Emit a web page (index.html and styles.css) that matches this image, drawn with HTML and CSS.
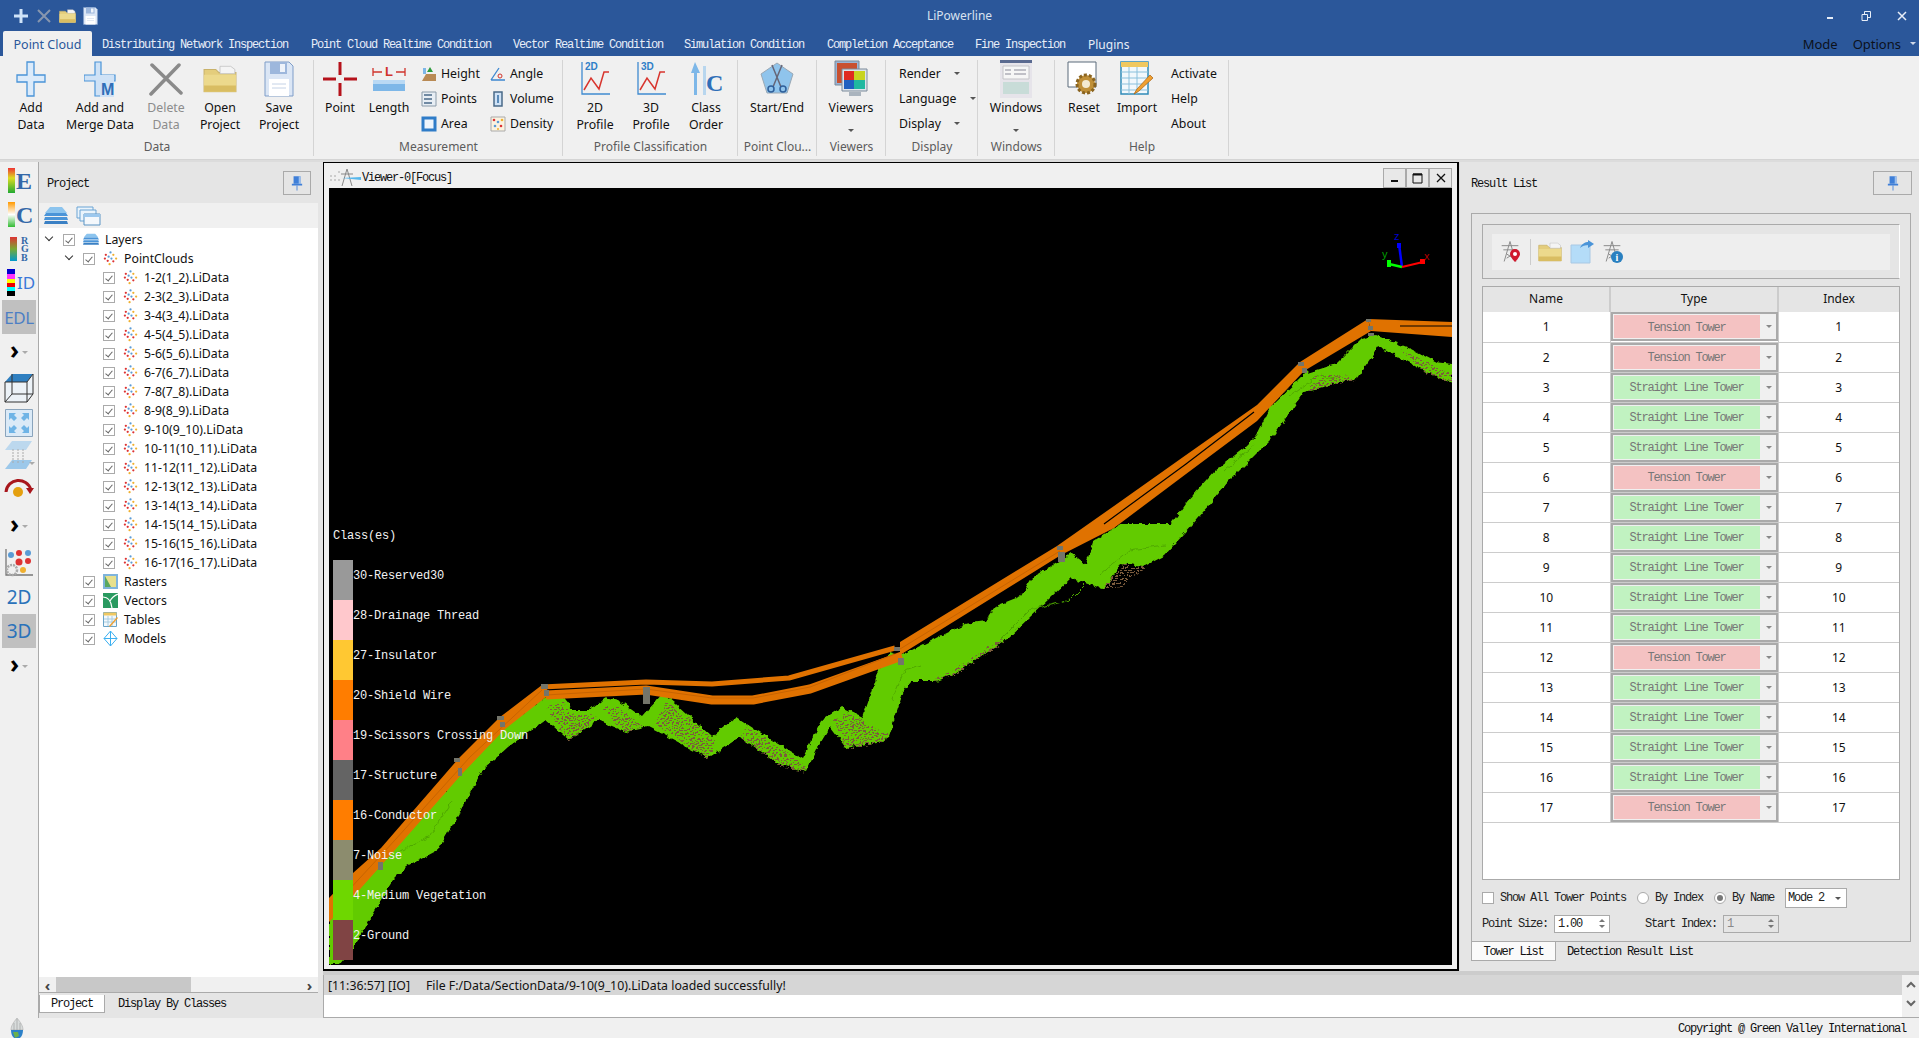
FILE: index.html
```html
<!DOCTYPE html>
<html lang="en">
<head>
<meta charset="utf-8">
<title>LiPowerline</title>
<link rel="stylesheet" href="styles.css">
</head>
<body>
<svg class="defs" width="0" height="0">
  <defs>
    <symbol id="cloud" viewBox="0 0 16 16">
      <circle cx="8" cy="1.5" r="1.2" fill="#5b9bd5"/><circle cx="3" cy="4" r="1.2" fill="#d33"/><circle cx="11" cy="4" r="1.2" fill="#f0b030"/><circle cx="6" cy="6" r="1.2" fill="#5b9bd5"/><circle cx="2" cy="8" r="1.2" fill="#d33"/><circle cx="9" cy="8" r="1.2" fill="#5b9bd5"/><circle cx="14" cy="8" r="1.2" fill="#f0b030"/><circle cx="5" cy="10.5" r="1.2" fill="#d33"/><circle cx="11" cy="11" r="1.2" fill="#d33"/><circle cx="7" cy="14" r="1.2" fill="#f0b030"/>
    </symbol>
    <symbol id="layers" viewBox="0 0 24 18">
      <path d="M6 0h12l5 6H1z" fill="#8cc4ee"/><path d="M2 6h20l2 3H0z" fill="#4a94d8"/><path d="M1 10h22l1 3H0z" fill="#4a94d8"/><path d="M1 14h22l1 3H0z" fill="#3a80c4"/>
    </symbol>
    <symbol id="folder" viewBox="0 0 32 26">
      <path d="M1 4h11l3 3h16v18H1z" fill="#e4cd7c" stroke="#c9b26a"/><path d="M16 1h10l4 3v4H16z" fill="#f4f4f4" stroke="#bbb" stroke-width=".7"/><path d="M1 9h30v16H1z" fill="#ecd98c"/><path d="M1 19h30v6H1z" fill="#d9bd62"/>
    </symbol>
    <symbol id="floppy" viewBox="0 0 30 36">
      <path d="M1 1h24l4 4v30H1z" fill="#dbe6f5" stroke="#7e9dc8"/><path d="M6 1h17v12H6z" fill="#9db7dc"/><path d="M16 3h5v8h-5z" fill="#eef3fa"/><path d="M5 18h20v17H5z" fill="#fff"/><path d="M8 23h14M8 27h14" stroke="#c4d2e6"/>
    </symbol>
    <symbol id="pin" viewBox="0 0 14 18">
      <path d="M3 1h8v9H3z" fill="#3f7fd8"/><path d="M1 10h12v2H1z" fill="#3f7fd8"/><path d="M9 1h2v9H9z" fill="#9cc0ee"/><path d="M7 12v6" stroke="#3f7fd8"/>
    </symbol>
    <symbol id="tower" viewBox="0 0 24 26">
      <g fill="none" stroke="#8c8c8c" stroke-width="1.2"><path d="M12 1 5 25M12 1l7 24M2 6h20M4 11h16M8 16l8 5M16 16l-8 5"/></g>
    </symbol>
    <pattern id="specks" width="5" height="5" patternUnits="userSpaceOnUse">
      <rect width="2" height="1" x="0" y="0" fill="#7b5b3c"/><rect width="1" height="2" x="3" y="2" fill="#7b5b3c"/><rect width="2" height="1" x="1" y="3" fill="#7b5b3c"/><rect width="1" height="1" x="4" y="0" fill="#7b5b3c"/>
    </pattern>
    <filter id="rough" x="-2%" y="-2%" width="104%" height="104%">
      <feTurbulence type="fractalNoise" baseFrequency=".16" numOctaves="2" seed="4"/>
      <feDisplacementMap in="SourceGraphic" scale="6" xChannelSelector="R" yChannelSelector="G"/>
    </filter>
  </defs>
</svg>

<div class="app">
  <header class="titlebar">
    <div class="qat">
      <svg width="16" height="16" viewBox="0 0 16 16"><path d="M8 1v14M1 8h14" stroke="#cfe3f8" stroke-width="3"/></svg>
      <svg width="16" height="16" viewBox="0 0 16 16"><path d="M2 2l12 12M14 2 2 14" stroke="#8796ae" stroke-width="2"/></svg>
      <svg width="17" height="14" viewBox="0 0 32 26"><use href="#folder"/></svg>
      <svg width="15" height="18" viewBox="0 0 30 36"><use href="#floppy"/></svg>
    </div>
    <div class="apptitle">LiPowerline</div>
    <div class="winctl">
      <svg width="10" height="10" viewBox="0 0 10 10"><path d="M2 7h6" stroke="#e8eef8" stroke-width="2"/></svg>
      <svg width="10" height="10" viewBox="0 0 10 10"><path d="M1 3.500h5.500v6H1zM3.500 3V.500h6v6H7" fill="none" stroke="#e8eef8"/></svg>
      <svg width="10" height="10" viewBox="0 0 10 10"><path d="M1 1l8 8M9 1 1 9" stroke="#e8eef8" stroke-width="1.500"/></svg>
    </div>
  </header>
  <nav class="tabs">
    <span class="tab active">Point Cloud</span>
    <span class="tab mono t1">Distributing Network Inspection</span>
    <span class="tab mono t2">Point Cloud Realtime Condition</span>
    <span class="tab mono t3">Vector Realtime Condition</span>
    <span class="tab mono t4">Simulation Condition</span>
    <span class="tab mono t5">Completion Acceptance</span>
    <span class="tab mono t6">Fine Inspection</span>
    <span class="tab t7">Plugins</span>
    <span class="tabs-right"><span>Mode</span><span>Options</span><i class="caret dark"></i></span>
  </nav>

  <section class="ribbon">
    <div class="group g-data">
      <div class="group-body">
        <div class="big w-add"><svg width="30" height="38" viewBox="0 0 30 38"><path d="M11 2h7v13h11v7H18v14h-7V22H1v-7h10z" fill="#dcebfa" stroke="#4a94d8" stroke-width="1.300"/></svg><span>Add<br>Data</span></div>
        <div class="big w-merge"><svg width="32" height="38" viewBox="0 0 32 38"><path d="M11 2h6v13h14v6H17v15h-6V21H0v-6h11z" fill="#cfe2f6" stroke="#4a94d8" stroke-width="1.200"/><path d="M16 15h14v22H16z" fill="#cfe2f6"/><text class="micon" x="17" y="35">M</text></svg><span>Add and<br>Merge Data</span></div>
        <div class="big w-del off"><svg width="34" height="34" viewBox="0 0 34 34"><path d="M2 32 30 3M3 3l29 28" stroke="#8a8a8a" stroke-width="3.500" stroke-linecap="round"/></svg><span>Delete<br>Data</span></div>
        <div class="big w-open"><svg width="34" height="32" viewBox="0 0 32 26"><use href="#folder"/></svg><span>Open<br>Project</span></div>
        <div class="big w-save"><svg width="30" height="36" viewBox="0 0 30 36"><use href="#floppy"/></svg><span>Save<br>Project</span></div>
      </div>
      <div class="group-label">Data</div>
    </div>
    <div class="group g-meas">
      <div class="group-body">
        <div class="big w-point"><svg width="34" height="34" viewBox="0 0 34 34"><path d="M17 0v13M17 21v13M0 17h13M21 17h13" stroke="#b5121b" stroke-width="3"/></svg><span>Point</span></div>
        <div class="big w-len"><svg width="34" height="28" viewBox="0 0 34 28"><path d="M1 7h9M24 7h9M1 3v8M33 3v8" stroke="#d0342c" stroke-width="1.300"/><text class="licon" x="13" y="11">L</text><path d="M1 15h32v11H1z" fill="#7db7e8"/><path d="M1 15h32v4H1z" fill="#b9d9f4"/></svg><span>Length</span></div>
        <div class="smalls first">
          <div class="small"><svg width="16" height="16" viewBox="0 0 16 16"><path d="M1 15 5 8h10v7z" fill="#b98a54"/><path d="M9 1l3 5H6z" fill="#2c9a3c"/><path d="M2 2h3v6H2z" fill="#7db7e8"/></svg>Height</div>
          <div class="small"><svg width="16" height="16" viewBox="0 0 16 16"><path d="M1 1h14v14H1z" fill="#e8eef4" stroke="#8a9aa8"/><path d="M3 4h8M3 8h8M3 12h8" stroke="#4a6a88" stroke-width="1.500"/></svg>Points</div>
          <div class="small"><svg width="16" height="16" viewBox="0 0 16 16"><path d="M2 2h12v12H2z" fill="#eef5fc" stroke="#2f7cc8" stroke-width="3"/></svg>Area</div>
        </div>
        <div class="smalls">
          <div class="small"><svg width="16" height="16" viewBox="0 0 16 16"><path d="M1 14 9 2M1 14h14" stroke="#3c86d0" fill="none" stroke-width="1.300"/><circle cx="10" cy="10" r="2" fill="none" stroke="#d0342c"/></svg>Angle</div>
          <div class="small"><svg width="16" height="16" viewBox="0 0 16 16"><path d="M4 1h8v14H4z" fill="#cfe2f6" stroke="#4a6a88" stroke-width="1.500"/><path d="M7 4h2v8H7z" fill="#5a8ab8"/></svg>Volume</div>
          <div class="small"><svg width="16" height="16" viewBox="0 0 16 16"><path d="M1 1h14v14H1z" fill="#fbf3e0" stroke="#aaa"/><circle cx="4" cy="4" r="1.300" fill="#d33"/><circle cx="8" cy="6" r="1.300" fill="#5b9bd5"/><circle cx="12" cy="4" r="1.300" fill="#f0b030"/><circle cx="5" cy="10" r="1.300" fill="#5b9bd5"/><circle cx="11" cy="10" r="1.300" fill="#d33"/><circle cx="8" cy="13" r="1" fill="#f0b030"/></svg>Density</div>
        </div>
      </div>
      <div class="group-label">Measurement</div>
    </div>
    <div class="group g-prof">
      <div class="group-body">
        <div class="big w-56"><svg width="34" height="38" viewBox="0 0 34 38"><path d="M4 2v32h28" fill="none" stroke="#3f8ad0" stroke-width="1.300"/><text class="dicon" x="7" y="10">2D</text><path d="M6 30l7-12 8 11 5-17h5" fill="none" stroke="#d8352e" stroke-width="1.500"/></svg><span>2D<br>Profile</span></div>
        <div class="big w-56"><svg width="34" height="38" viewBox="0 0 34 38"><path d="M4 2v32h28" fill="none" stroke="#3f8ad0" stroke-width="1.300"/><text class="dicon" x="7" y="10">3D</text><path d="M6 30l7-12 8 11 5-17h5" fill="none" stroke="#d8352e" stroke-width="1.500"/></svg><span>3D<br>Profile</span></div>
        <div class="big w-cls"><svg width="34" height="36" viewBox="0 0 34 36"><path d="M6 1 2 12h3v22h3V12h3z" fill="#7db7e8"/><path d="M14 5h3v29h-3z" fill="#b8d6ee"/><text class="cicon" x="17" y="30">C</text></svg><span>Class<br>Order</span></div>
      </div>
      <div class="group-label">Profile Classification</div>
    </div>
    <div class="group g-se">
      <div class="group-body">
        <div class="big w-se"><svg width="36" height="36" viewBox="0 0 36 36"><path d="M18 2 34 13 28 32H8L2 13z" fill="#8fc4ec" stroke="#9aa8b4"/><path d="M13 4l9 22M23 4 14 26" stroke="#667" stroke-width="1.500"/><circle cx="12" cy="28" r="3" fill="none" stroke="#2f5f9a" stroke-width="1.500"/><circle cx="24" cy="28" r="3" fill="none" stroke="#2f5f9a" stroke-width="1.500"/></svg><span>Start/End</span></div>
      </div>
      <div class="group-label">Point Clou...</div>
    </div>
    <div class="group g-view">
      <div class="group-body">
        <div class="big w-vw"><svg width="34" height="38" viewBox="0 0 34 38"><path d="M1 1h24v24H1z" fill="#9ab4d4" stroke="#7a8a9a"/><path d="M3 3h20v20H3z" fill="#c85030"/><path d="M8 9h25v22H8z" fill="#dde3ea" stroke="#7a8a9a"/><path d="M10 11h10v9H10z" fill="#e02a20"/><path d="M20 11h11v9H20z" fill="#c8d420"/><path d="M10 20h10v9H10z" fill="#2060c0"/><path d="M20 20h11v9H20z" fill="#20b8a0"/><path d="M15 32h12v4H15z" fill="#aab4be"/></svg><span>Viewers</span><i class="caret below"></i></div>
      </div>
      <div class="group-label">Viewers</div>
    </div>
    <div class="group g-disp">
      <div class="group-body col-items">
        <div class="small plain">Render<i class="caret"></i></div>
        <div class="small plain">Language<i class="caret"></i></div>
        <div class="small plain">Display<i class="caret"></i></div>
      </div>
      <div class="group-label">Display</div>
    </div>
    <div class="group g-win">
      <div class="group-body">
        <div class="big w-win"><svg width="32" height="38" viewBox="0 0 32 38"><path d="M0 0h32v38H0z" fill="#e6e4ea"/><path d="M0 0h32v3H0z" fill="#5a6a90"/><path d="M3 6h26v13H3z" fill="#f6f6f6" stroke="#c4c4c8"/><path d="M5 10h6M14 10h12M5 14h6M14 14h12" stroke="#8a8a98"/><path d="M3 22h26v12H3z" fill="#c8dcd8"/></svg><span>Windows</span><i class="caret below"></i></div>
      </div>
      <div class="group-label">Windows</div>
    </div>
    <div class="group g-help">
      <div class="group-body">
        <div class="big w-reset"><svg width="34" height="36" viewBox="0 0 34 36"><path d="M1 1h28v25H1z" fill="#fff" stroke="#5a6a7a"/><circle cx="19" cy="23" r="9" fill="#c09038" stroke="#8a6420" stroke-width="3" stroke-dasharray="3 2"/><circle cx="19" cy="23" r="4" fill="#f4ead0"/></svg><span>Reset</span></div>
        <div class="big w-imp"><svg width="34" height="36" viewBox="0 0 34 36"><path d="M1 1h27v32H1z" fill="#f2f8fc" stroke="#2f8ab8" stroke-width="1.500"/><path d="M1 1h27v5H1z" fill="#f0c860"/><path d="M1 11h27M1 17h27M1 23h27M1 29h27M9 6v27M17 6v27" stroke="#8ac0dc"/><path d="M14 33l3-5 13-14 3 3-14 13z" fill="#f0a030" stroke="#a86010" stroke-width=".7"/></svg><span>Import</span></div>
        <div class="col-items help-col">
          <div class="small plain">Activate</div>
          <div class="small plain">Help</div>
          <div class="small plain">About</div>
        </div>
      </div>
      <div class="group-label">Help</div>
    </div>
  </section>

  <main class="work">
    <aside class="strip">
      <div class="si h34"><svg width="28" height="26" viewBox="0 0 28 26"><defs><linearGradient id="heat" x1="0" y1="0" x2="0" y2="1"><stop offset="0" stop-color="#e33"/><stop offset=".4" stop-color="#dd2"/><stop offset="1" stop-color="#2a3"/></linearGradient></defs><rect x="3" y="0" width="7" height="25" fill="url(#heat)"/><text class="bigletter" x="11" y="21">E</text></svg></div>
      <div class="si h34"><svg width="28" height="26" viewBox="0 0 28 26"><defs><linearGradient id="cg" x1="0" y1="0" x2="0" y2="1"><stop offset="0" stop-color="#f90"/><stop offset=".5" stop-color="#fff"/><stop offset="1" stop-color="#3b3"/></linearGradient></defs><rect x="3" y="0" width="7" height="25" fill="url(#cg)"/><text class="bigletter" x="11" y="21">C</text></svg></div>
      <div class="si h34"><svg width="28" height="26" viewBox="0 0 28 26"><defs><linearGradient id="rg" x1="0" y1="0" x2="0" y2="1"><stop offset="0" stop-color="#d33"/><stop offset=".5" stop-color="#7a3"/><stop offset="1" stop-color="#09c"/></linearGradient></defs><rect x="5" y="1" width="7" height="24" fill="url(#rg)"/><text class="tinyletter" x="16" y="8">R</text><text class="tinyletter" x="16" y="16">G</text><text class="tinyletter" x="16" y="25">B</text></svg></div>
      <div class="si h34"><svg width="32" height="28" viewBox="0 0 32 28"><path d="M4 0h8v5H4z" fill="#00c"/><path d="M4 5h8v5H4z" fill="#f3f"/><path d="M4 10h8v4H4z" fill="#ff0"/><path d="M4 14h8v4H4z" fill="#e00"/><path d="M4 18h8v4H4z" fill="#0ff"/><path d="M4 22h8v5H4z" fill="#000"/><text class="idletter" x="14" y="20">ID</text></svg></div>
      <div class="si h34 on"><span class="edl">EDL</span></div>
      <div class="si h36"><span class="chev">›</span><i class="caret pale"></i></div>
      <div class="si h36"><svg width="30" height="30" viewBox="0 0 30 30"><path d="M8 1h21l-6 8H1z" fill="#2f7fc0"/><path d="M1 9h22v20H1zM23 9l6-8v20l-6 8M1 29l7-8h21M8 1v20" fill="#eaf3fb" fill-opacity=".6" stroke="#333"/></svg></div>
      <div class="si h34"><svg width="28" height="28" viewBox="0 0 28 28"><path d="M.5.5h27v27H.5z" fill="#dbeaf7" stroke="#8aa4bc"/><path d="M4 4h7l-2 2 3 3-3 3-3-3-2 2zM24 4v7l-2-2-3 3-3-3 3-3-2-2zM4 24v-7l2 2 3-3 3 3-3 3 2 2zM24 24h-7l2-2-3-3 3-3 3 3 2-2z" fill="#6fb4e6"/></svg></div>
      <div class="si h30"><svg width="30" height="28" viewBox="0 0 30 28"><path d="M8 0h20l-6 9H1z" fill="#bcd8ee"/><path d="M8 19h20l-6 9H1z" fill="#9cc8ea"/><path d="M9 8v14M14 8v14M19 8v14" stroke="#aaa" stroke-dasharray="2 1"/></svg><i class="caret pale abs"></i></div>
      <div class="si h36"><svg width="30" height="26" viewBox="0 0 30 26"><path d="M2 17C3 3 23 1 27 15" fill="none" stroke="#a8161c" stroke-width="3"/><path d="M22 13h8l-4 6z" fill="#a8161c"/><circle cx="14" cy="17" r="5" fill="#e4a010"/></svg></div>
      <div class="si h40"><span class="chev">›</span><i class="caret pale"></i></div>
      <div class="si h34"><svg width="30" height="30" viewBox="0 0 30 30"><path d="M2 1v26h27" fill="none" stroke="#777" stroke-width="1.300"/><circle cx="7" cy="7" r="3" fill="#5b9bd5"/><circle cx="15" cy="5" r="3" fill="#d33"/><circle cx="24" cy="5" r="3" fill="#5b9bd5"/><circle cx="15" cy="14" r="3.500" fill="#d33"/><circle cx="24" cy="13" r="3" fill="#d33"/><circle cx="19" cy="22" r="3" fill="#f0b030"/><circle cx="8" cy="22" r="5" fill="none" stroke="#aaa" stroke-width="2.500" stroke-dasharray="2 1"/></svg></div>
      <div class="si h34"><span class="dee">2D</span></div>
      <div class="si h34 on"><span class="dee">3D</span></div>
      <div class="si h36"><span class="chev">›</span><i class="caret pale"></i></div>
    </aside>

    <section class="leftpanel">
      <div class="panel-head"><span class="mono headtext">Project</span><span class="pinbtn"><svg width="12" height="16" viewBox="0 0 14 18"><use href="#pin"/></svg></span></div>
      <div class="panel-tools">
        <svg width="24" height="18" viewBox="0 0 24 18"><use href="#layers"/></svg>
        <svg width="25" height="20" viewBox="0 0 25 20"><path d="M1 1h16v11H1z" fill="#eaf4fc" stroke="#6aa4d4"/><path d="M4 4h16v11H4z" fill="#eaf4fc" stroke="#6aa4d4"/><path d="M8 8h16v11H8z" fill="#f4f8fc" stroke="#5a94c4"/><path d="M8 8h16v3H8z" fill="#9cc8ee"/></svg>
      </div>
      <div class="tree">
        <div class="tr l0"><i class="tw"></i><i class="cb"></i><svg class="lay" width="16" height="13" viewBox="0 0 24 18"><use href="#layers"/></svg>Layers</div>
        <div class="tr l1"><i class="tw"></i><i class="cb"></i><svg width="15" height="15"><use href="#cloud"/></svg>PointClouds</div>
        <div class="tr l2"><i class="cb"></i><svg width="15" height="15"><use href="#cloud"/></svg>1-2(1_2).LiData</div>
        <div class="tr l2"><i class="cb"></i><svg width="15" height="15"><use href="#cloud"/></svg>2-3(2_3).LiData</div>
        <div class="tr l2"><i class="cb"></i><svg width="15" height="15"><use href="#cloud"/></svg>3-4(3_4).LiData</div>
        <div class="tr l2"><i class="cb"></i><svg width="15" height="15"><use href="#cloud"/></svg>4-5(4_5).LiData</div>
        <div class="tr l2"><i class="cb"></i><svg width="15" height="15"><use href="#cloud"/></svg>5-6(5_6).LiData</div>
        <div class="tr l2"><i class="cb"></i><svg width="15" height="15"><use href="#cloud"/></svg>6-7(6_7).LiData</div>
        <div class="tr l2"><i class="cb"></i><svg width="15" height="15"><use href="#cloud"/></svg>7-8(7_8).LiData</div>
        <div class="tr l2"><i class="cb"></i><svg width="15" height="15"><use href="#cloud"/></svg>8-9(8_9).LiData</div>
        <div class="tr l2"><i class="cb"></i><svg width="15" height="15"><use href="#cloud"/></svg>9-10(9_10).LiData</div>
        <div class="tr l2"><i class="cb"></i><svg width="15" height="15"><use href="#cloud"/></svg>10-11(10_11).LiData</div>
        <div class="tr l2"><i class="cb"></i><svg width="15" height="15"><use href="#cloud"/></svg>11-12(11_12).LiData</div>
        <div class="tr l2"><i class="cb"></i><svg width="15" height="15"><use href="#cloud"/></svg>12-13(12_13).LiData</div>
        <div class="tr l2"><i class="cb"></i><svg width="15" height="15"><use href="#cloud"/></svg>13-14(13_14).LiData</div>
        <div class="tr l2"><i class="cb"></i><svg width="15" height="15"><use href="#cloud"/></svg>14-15(14_15).LiData</div>
        <div class="tr l2"><i class="cb"></i><svg width="15" height="15"><use href="#cloud"/></svg>15-16(15_16).LiData</div>
        <div class="tr l2"><i class="cb"></i><svg width="15" height="15"><use href="#cloud"/></svg>16-17(16_17).LiData</div>
        <div class="tr l1 leaf"><i class="cb"></i><svg width="15" height="15" viewBox="0 0 15 15"><path d="M0 0h15v15H0z" fill="#7fb4dc"/><path d="M2 2h11v11H2z" fill="#e8e08c"/><path d="M2 2l6 11H2z" fill="#5aa860"/></svg>Rasters</div>
        <div class="tr l1 leaf"><i class="cb"></i><svg width="15" height="15" viewBox="0 0 15 15"><path d="M0 0h15v15H0z" fill="#2a9a60"/><path d="M0 4c5 0 8 3 9 11M15 1C10 3 8 6 7 8" stroke="#fff" stroke-width="1.200" fill="none"/></svg>Vectors</div>
        <div class="tr l1 leaf"><i class="cb"></i><svg width="15" height="15" viewBox="0 0 15 15"><path d="M.5.500h13v14H.5z" fill="#f2f8fc" stroke="#6aa4c8"/><path d="M.5.500h13v3H.5z" fill="#f0c860"/><path d="M1 7h12M1 10h12M5 4v10M9 4v10" stroke="#a8cce0"/><path d="M6 14l8-9 1 1-8 9z" fill="#f0a030"/></svg>Tables</div>
        <div class="tr l1 leaf"><i class="cb"></i><svg width="15" height="15" viewBox="0 0 15 15"><path d="M7.500 0 14 7.500 7.500 15 1 7.500zM7.500 0v15M1 7.500h13" fill="none" stroke="#3cb0f0"/></svg>Models</div>
      </div>
      <div class="hscroll"><span class="arrow">‹</span><span class="hthumb"></span><span class="arrow end">›</span></div>
      <div class="dock-tabs"><span class="dt active mono">Project</span><span class="dt mono">Display By Classes</span></div>
    </section>

    <section class="center">
      <div class="upper">
        <section class="viewer">
          <div class="viewer-title">
            <svg class="vicon" width="32" height="20" viewBox="0 0 32 20"><path d="M0 8h2v2H0zM4 8h2v2H4zM8 4h2v2H8zM0 12h2v2H0zM4 12h2v2H4zM8 12h2v2H8z" fill="#ccc"/><path d="M17 2l-5 17M17 2l5 17M11 7h12" stroke="#888" fill="none"/><path d="M12 11l19-1v3z" fill="#58b8ec"/></svg>
            <span class="mono vtext">Viewer-0[Focus]</span>
            <span class="vbtns">
              <span><svg width="10" height="10" viewBox="0 0 10 10"><path d="M1 8h7" stroke="#111" stroke-width="2"/></svg></span>
              <span><svg width="11" height="11" viewBox="0 0 11 11"><path d="M1 1h9v9H1z" fill="none" stroke="#111"/><path d="M1 1.500h9" stroke="#111" stroke-width="2"/></svg></span>
              <span><svg width="10" height="10" viewBox="0 0 10 10"><path d="M1 1l8 8M9 1 1 9" stroke="#111" stroke-width="1.300"/></svg></span>
            </span>
          </div>
          <div class="canvas">
            <svg class="scene" viewBox="329 188 1123 777" width="1123" height="777">
              <g filter="url(#rough)">
                <path fill="#62cb00" d="M329 918L353 893 402 838 461 771 504 726 530 708 549 695 561 695 573 710 589 710 606 697 618 700 642 717 663 693 675 703 712 737 736 717 753 728 802 758 822 720 842 707 863 717 879 670 891 653 900 656 964 624 986 621 996 606 1021 596 1032 578 1071 553 1086 564 1093 542 1121 524 1171 524 1186 503 1214 471 1243 449 1257 435 1271 406 1304 374 1336 364 1361 339 1375 335 1411 349 1436 362 1452 364 1452 383 1425 371 1379 346 1357 378 1304 392 1271 439 1229 481 1193 524 1164 556 1143 567 1121 564 1104 589 1071 578 1007 639 954 674 936 681 911 681 904 690 887 740 846 748 830 727 818 747 806 772 781 765 740 737 708 758 648 727 626 732 598 720 569 740 546 720 532 730 508 747 483 770 463 807 438 850 406 867 393 880 373 913 353 947 338 965 329 965Z"/>
                <g fill="none" stroke="#4fa800" stroke-width="1">
                  <path d="M395 855 430 835 452 800"/><path d="M1000 640 1030 610 1070 600 1085 585"/><path d="M1100 575 1130 550 1165 545"/><path d="M1290 395 1320 375 1335 378"/><path d="M1225 470 1255 445"/><path d="M892 700 905 670 920 665"/>
                </g>
                <g fill="url(#specks)">
                  <path d="M546 707L561 701 573 714 598 716 569 742Z"/>
                  <path d="M602 708L618 706 642 726 626 734Z"/>
                  <path d="M655 723L667 701 716 741 708 760Z"/>
                  <path d="M740 737L748 728 806 766 806 773 781 767Z"/>
                  <path d="M834 720L850 713 887 735 887 741 846 750Z"/>
                  <path d="M1307 392L1318 374 1350 376 1356 380Z"/>
                  <path d="M1400 350L1452 374 1452 384 1425 372Z"/>
                  <path d="M1100 590L1104 585 1125 565 1145 568 1115 590Z"/>
                  <path d="M930 682L950 672 1000 640 1005 642 955 676Z"/>
                </g>
              </g>
              <g fill="#e07200">
                <path d="M329 898L353 873 381 848 459 758 500 717 542 685 550 692 546 697 504 730 461 775 402 842 353 897 329 922Z"/>
                <path d="M900 642L1057 546 1114 506 1186 455 1257 405 1300 362 1368 319 1371 331 1304 371 1257 421 1186 474 1114 528 1061 555 900 655Z"/>
                <path d="M1368 319L1452 322 1452 337 1371 331Z"/>
              </g>
              <g fill="none" stroke="#e07200" stroke-linejoin="round">
                <path stroke-width="5" d="M542 687L646 682 712 684 789 678 895 648"/>
                <path stroke-width="9" d="M546 695L646 690 712 700 753 700 810 689 902 656"/>
              </g>
              <g fill="none" stroke="#c86400" stroke-width="1">
                <path d="M335 905 395 840 470 757 542 690"/>
                <path d="M900 649 1060 551"/>
                <path d="M546 695 646 689 712 698 753 698 810 687 895 654"/>
              </g>
              <path fill="none" stroke="#000" stroke-width="1.200" d="M1104 524L1186 464 1254 412"/>
              <path fill="none" stroke="#000" stroke-width="1" d="M1400 326H1452"/>
              <g fill="#74756a">
                <rect x="643" y="687" width="7" height="17"/>
                <rect x="541" y="684" width="7" height="5"/><rect x="544" y="690" width="5" height="6"/>
                <rect x="497" y="716" width="7" height="4"/><rect x="500" y="722" width="5" height="5"/>
                <rect x="454" y="758" width="6" height="4"/><rect x="458" y="768" width="4" height="8"/>
                <rect x="378" y="862" width="5" height="8"/>
                <rect x="894" y="647" width="6" height="4"/><rect x="898" y="658" width="6" height="7"/>
                <rect x="1057" y="546" width="6" height="4"/><rect x="1058" y="552" width="7" height="10"/>
                <rect x="1298" y="362" width="6" height="4"/><rect x="1302" y="368" width="5" height="5"/>
                <rect x="1366" y="319" width="5" height="3"/><rect x="1368" y="326" width="5" height="4"/><rect x="1368" y="333" width="6" height="3"/>
              </g>
              <path d="M1402 267 1399 244" stroke="#00f" stroke-width="2.500"/>
              <path d="M1402 267 1389 264" stroke="#0f0" stroke-width="2.500"/>
              <path d="M1402 267 1423 262" stroke="#f00" stroke-width="2"/>
              <rect x="1387" y="260" width="4" height="7" fill="#0f0"/>
              <rect x="1420" y="259" width="5" height="5" fill="#f00"/>
              <rect x="1397" y="243" width="4" height="5" fill="#00f"/>
              <text class="ax" x="1394" y="240" fill="#0000cc">z</text>
              <text class="ax" x="1382" y="258" fill="#00a000">y</text>
              <text class="ax" x="1424" y="260" fill="#b00000">x</text>
            </svg>
            <div class="legend">
              <div class="legend-title">Class(es)</div>
              <div class="lg"><i class="c30"></i>30-Reserved30</div>
              <div class="lg"><i class="c28"></i>28-Drainage Thread</div>
              <div class="lg"><i class="c27"></i>27-Insulator</div>
              <div class="lg"><i class="c20"></i>20-Shield Wire</div>
              <div class="lg"><i class="c19"></i>19-Scissors Crossing Down</div>
              <div class="lg"><i class="c17"></i>17-Structure</div>
              <div class="lg"><i class="c16"></i>16-Conductor</div>
              <div class="lg"><i class="c7"></i>7-Noise</div>
              <div class="lg"><i class="c4"></i>4-Medium Vegetation</div>
              <div class="lg"><i class="c2"></i>2-Ground</div>
            </div>
          </div>
        </section>

        <section class="rightpanel">
          <div class="panel-head rp"><span class="mono headtext">Result List</span><span class="pinbtn wide"><svg width="12" height="16" viewBox="0 0 14 18"><use href="#pin"/></svg></span></div>
          <div class="groupbox">
            <div class="rtools"><div class="rtools-in">
              <svg width="22" height="24" viewBox="0 0 22 24"><use href="#tower" width="20" height="23"/><path d="M15 9a5 5 0 0 1 5 5c0 3-5 8-5 8s-5-5-5-8a5 5 0 0 1 5-5z" fill="#d0182c"/><circle cx="15" cy="14" r="2" fill="#fff"/></svg>
              <i class="vsep"></i>
              <svg width="24" height="20" viewBox="0 0 32 26"><use href="#folder"/></svg>
              <svg width="24" height="24" viewBox="0 0 24 24"><path d="M1 5h19v18H1z" fill="#b4dcf8" stroke="#a8c8e4"/><path d="M10 8c2-5 6-6 8-6V0l6 4-6 4V5c-3 0-6 1-8 3z" fill="#4a94d8"/></svg>
              <svg width="24" height="24" viewBox="0 0 24 24"><use href="#tower" width="20" height="23"/><circle cx="15" cy="17" r="6" fill="#2a80c0"/><text class="iicon" x="13.500" y="21">i</text></svg>
            </div></div>
            <div class="tablewrap">
              <table class="towers">
                <thead><tr><th class="c-n">Name</th><th class="c-t">Type</th><th class="c-i">Index</th></tr></thead>
                <tbody>
                  <tr><td>1</td><td class="tc"><div class="combo"><span class="ten">Tension Tower</span><i class="caret"></i></div></td><td>1</td></tr>
                  <tr><td>2</td><td class="tc"><div class="combo"><span class="ten">Tension Tower</span><i class="caret"></i></div></td><td>2</td></tr>
                  <tr><td>3</td><td class="tc"><div class="combo"><span class="str">Straight Line Tower</span><i class="caret"></i></div></td><td>3</td></tr>
                  <tr><td>4</td><td class="tc"><div class="combo"><span class="str">Straight Line Tower</span><i class="caret"></i></div></td><td>4</td></tr>
                  <tr><td>5</td><td class="tc"><div class="combo"><span class="str">Straight Line Tower</span><i class="caret"></i></div></td><td>5</td></tr>
                  <tr><td>6</td><td class="tc"><div class="combo"><span class="ten">Tension Tower</span><i class="caret"></i></div></td><td>6</td></tr>
                  <tr><td>7</td><td class="tc"><div class="combo"><span class="str">Straight Line Tower</span><i class="caret"></i></div></td><td>7</td></tr>
                  <tr><td>8</td><td class="tc"><div class="combo"><span class="str">Straight Line Tower</span><i class="caret"></i></div></td><td>8</td></tr>
                  <tr><td>9</td><td class="tc"><div class="combo"><span class="str">Straight Line Tower</span><i class="caret"></i></div></td><td>9</td></tr>
                  <tr><td>10</td><td class="tc"><div class="combo"><span class="str">Straight Line Tower</span><i class="caret"></i></div></td><td>10</td></tr>
                  <tr><td>11</td><td class="tc"><div class="combo"><span class="str">Straight Line Tower</span><i class="caret"></i></div></td><td>11</td></tr>
                  <tr><td>12</td><td class="tc"><div class="combo"><span class="ten">Tension Tower</span><i class="caret"></i></div></td><td>12</td></tr>
                  <tr><td>13</td><td class="tc"><div class="combo"><span class="str">Straight Line Tower</span><i class="caret"></i></div></td><td>13</td></tr>
                  <tr><td>14</td><td class="tc"><div class="combo"><span class="str">Straight Line Tower</span><i class="caret"></i></div></td><td>14</td></tr>
                  <tr><td>15</td><td class="tc"><div class="combo"><span class="str">Straight Line Tower</span><i class="caret"></i></div></td><td>15</td></tr>
                  <tr><td>16</td><td class="tc"><div class="combo"><span class="str">Straight Line Tower</span><i class="caret"></i></div></td><td>16</td></tr>
                  <tr><td>17</td><td class="tc"><div class="combo"><span class="ten">Tension Tower</span><i class="caret"></i></div></td><td>17</td></tr>
                </tbody>
              </table>
            </div>
            <div class="opts mono">
              <i class="box"></i><span class="o1">Show All Tower Points</span>
              <i class="radio"></i><span class="o2">By Index</span>
              <i class="radio sel"></i><span class="o3">By Name</span>
              <span class="modebox">Mode 2<i class="caret"></i></span>
            </div>
            <div class="opts second mono">
              <span>Point Size:</span>
              <span class="spin">1.00<b class="updown"><i></i><i></i></b></span>
              <span class="startlabel">Start Index:</span>
              <span class="spin dis">1<b class="updown"><i></i><i></i></b></span>
            </div>
          </div>
          <div class="dock-tabs rt"><span class="dt active mono">Tower List</span><span class="dt mono">Detection Result List</span></div>
        </section>
      </div>
      <div class="splitter"></div>
      <section class="log">
        <div class="log-text">
          <div class="log-line"><span>[11:36:57] [IO]</span><span class="msg">File F:/Data/SectionData/9-10(9_10).LiData loaded successfully!</span></div>
          <div class="log-blank"></div>
        </div>
        <div class="log-scroll">
          <span><svg width="10" height="7" viewBox="0 0 10 7"><path d="M1 6l4-4 4 4" fill="none" stroke="#666" stroke-width="2"/></svg></span>
          <span><svg width="10" height="7" viewBox="0 0 10 7"><path d="M1 1l4 4 4-4" fill="none" stroke="#666" stroke-width="2"/></svg></span>
        </div>
      </section>
    </section>
  </main>

  <footer class="status">
    <svg width="16" height="22" viewBox="0 0 16 22"><path d="M8 0C4 5 2 8 2 12h12c0-4-2-7-6-12z" fill="#d8dcdc" stroke="#aaa" stroke-width=".6"/><path d="M8 1v11M5 5v7M11 5v7" stroke="#999" stroke-width=".6"/><path d="M2 12h12c0 6-3 9-6 9s-6-3-6-9z" fill="#2c80c8"/><path d="M4 14h5l1 4-4 2z" fill="#6ab04c"/></svg>
    <span class="mono copy">Copyright @ Green Valley International</span>
  </footer>
</div>
</body>
</html>
```

FILE: styles.css
```css
* { box-sizing: border-box; }
html, body { margin: 0; padding: 0; height: 100%; overflow: hidden; }
body { font-family: "Noto Sans", "Noto Sans CJK SC", sans-serif; font-size: 12.300px; color: #111; background: #f0f0f0; }
.defs { position: absolute; }
i { display: block; font-style: normal; }
svg { display: block; flex: none; }
.mono { font-family: "Liberation Mono", monospace; font-size: 12px; letter-spacing: -1.200px; line-height: 1; }
.app { width: 1919px; height: 1038px; display: flex; flex-direction: column; overflow: hidden; }

.titlebar { height: 31px; background: #2b579a; display: flex; align-items: center; position: relative; flex: none; }
.qat { display: flex; align-items: center; gap: 7px; padding-left: 13px; }
.apptitle { position: absolute; left: 0; right: 0; top: 7px; text-align: center; color: #d8e2f0; font-size: 12px; line-height: 17px; }
.winctl { margin-left: auto; display: flex; gap: 26px; padding-right: 12px; }

.tabs { height: 25px; background: #2b579a; display: flex; align-items: flex-end; flex: none; position: relative; color: #e8eef8; }
.tab { height: 25px; display: flex; align-items: center; white-space: nowrap; padding-top: 2px; }
.tab.active { margin-left: 3px; width: 89px; justify-content: center; background: #f0f0f0; color: #2b579a; font-size: 12.500px; border-radius: 2px 2px 0 0; }
.t1 { margin-left: 10px; width: 209px; }
.t2 { width: 202px; }
.t3 { width: 171px; }
.t4 { width: 143px; }
.t5 { width: 148px; }
.t6 { width: 113px; }
.t7 { font-size: 12px; }
.tabs-right { margin-left: auto; display: flex; align-items: center; height: 25px; color: #0c111a; gap: 15px; padding-right: 3px; font-size: 13px; }
.tabs-right .caret { margin-left: -6px; }

.caret { width: 0; height: 0; border-left: 3px solid transparent; border-right: 3px solid transparent; border-top: 3px solid #555; }
.caret.dark { border-top-color: #cfd8e8; }
.caret.pale { border-top-color: #aaa; }
.caret.abs { position: absolute; right: 3px; top: 22px; }
.caret.below { margin-top: 13px; }

.ribbon { height: 104px; background: #f0f0f0; display: flex; flex: none; border-bottom: 1px solid #d4d4d4; }
.group { display: flex; flex-direction: column; position: relative; padding-top: 4px; }
.group::after { content: ""; position: absolute; right: 0; top: 4px; bottom: 3px; width: 1px; background: #d4d4d4; }
.group-body { height: 79px; display: flex; }
.group-label { text-align: center; color: #5c5c5c; font-size: 12px; line-height: 16px; height: 16px; }
.g-data { width: 314px; }
.g-meas { width: 249px; }
.g-prof { width: 175px; }
.g-se { width: 79px; }
.g-view { width: 69px; }
.g-disp { width: 92px; }
.g-win { width: 77px; }
.g-help { width: 174px; }
.big { display: flex; flex-direction: column; align-items: center; text-align: center; line-height: 17px; flex: none; }
.big svg { height: 38px; margin-bottom: 1px; }
.big span { display: block; white-space: nowrap; }
.big.off { color: #8c8c8c; }
.w-add { width: 56px; margin-left: 3px; }
.w-merge { width: 82px; }
.w-del { width: 50px; }
.w-open { width: 58px; }
.w-save { width: 60px; }
.w-point { width: 52px; }
.w-len { width: 46px; }
.w-56 { width: 56px; }
.g-prof .group-body { padding-left: 4px; }
.w-cls { width: 54px; }
.w-se { width: 78px; }
.w-vw { width: 68px; }
.w-win { width: 76px; }
.w-reset { width: 54px; margin-left: 2px; }
.w-imp { width: 52px; }
.smalls { display: flex; flex-direction: column; width: 69px; padding-top: 1px; }
.smalls.first { margin-left: 9px; }
.small { height: 25px; display: flex; align-items: center; gap: 4px; white-space: nowrap; }
.col-items { display: flex; flex-direction: column; padding-left: 13px; padding-top: 1px; }
.g-disp .small .caret { margin-left: 9px; }
.help-col { padding-left: 8px; }

.work { height: 858px; display: flex; flex: none; background: #e5e5e5; border-top: 2px solid #dcdcdc; }
.strip { width: 39px; flex: none; background: #f0f0f0; display: flex; flex-direction: column; border-right: 1px solid #aaa; padding-top: 2px; }
.si { display: flex; align-items: center; justify-content: center; position: relative; gap: 3px; flex: none; }
.si.on { background: #c0c0c0; margin: 0 2px; }
.h30 { height: 30px; } .h34 { height: 34px; } .h36 { height: 36px; } .h40 { height: 40px; }
.edl { font-size: 17px; color: #4d7fc4; letter-spacing: -.5px; }
.dee { font-size: 19px; color: #2a72ba; }
.chev { font-size: 25px; font-weight: 700; line-height: 25px; color: #000; margin-top: -6px; }

.leftpanel { width: 284px; flex: none; display: flex; flex-direction: column; background: #e5e5e5; height: 851px; }
.panel-head { height: 41px; display: flex; align-items: center; justify-content: space-between; padding: 0 12px 0 8px; flex: none; background: #e5e5e5; }
.headtext { padding-top: 2px; }
.pinbtn { width: 28px; height: 24px; border: 1px solid #aaa; display: flex; align-items: center; justify-content: center; }
.pinbtn.wide { width: 39px; }
.panel-tools { height: 25px; background: #f0f0f0; display: flex; gap: 8px; align-items: center; padding-left: 5px; width: 279px; flex: none; }
.tree { flex: 1; background: #fff; width: 279px; padding-top: 2px; border-left: 1px solid #fff; overflow: hidden; }
.tr { height: 19px; display: flex; align-items: center; white-space: nowrap; position: relative; }
.tr svg { margin-right: 6px; }
.l0 { padding-left: 23px; }
.l1 { padding-left: 43px; }
.l2 { padding-left: 63px; }
.tr .cb { margin-right: 8px; }
.cb { width: 12px; height: 12px; border: 1px solid #aaa; position: relative; background: #fff; }
.cb::after { content: ""; position: absolute; left: 3px; top: 1px; width: 3px; height: 6px; border: solid #666; border-width: 0 1px 1px 0; transform: rotate(40deg); }
.tw { position: absolute; width: 6px; height: 6px; border: solid #333; border-width: 0 1.500px 1.500px 0; transform: rotate(45deg); top: 4px; }
.l0 .tw { left: 6px; }
.l1 .tw { left: 26px; }
.hscroll { height: 15px; width: 279px; background: #f0f0f0; display: flex; align-items: center; flex: none; border-bottom: 1px solid #aaa; position: relative; box-sizing: content-box; margin-bottom: 2px; }
.arrow { width: 17px; text-align: center; font-size: 15px; line-height: 14px; font-weight: 700; color: #444; flex: none; }
.arrow.end { margin-left: auto; }
.hthumb { width: 135px; height: 15px; background: #c8c8c8; }
.dock-tabs { display: flex; height: 18px; flex: none; align-items: stretch; }
.dt { display: flex; align-items: center; padding: 0 13px; }
.dt.active { background: #fff; border: 1px solid #aaa; border-top: 0; }
.leftpanel .dt.active { width: 66px; justify-content: center; padding: 0; }

.center { flex: 1; display: flex; flex-direction: column; min-width: 0; }
.upper { height: 809px; display: flex; flex: none; }
.viewer { width: 1136px; flex: none; border: 1px solid #000; background: #f0f0f0; border-right-width: 2px; border-bottom-width: 2px; display: flex; flex-direction: column; padding: 0 5px 4px 5px; height: 809px; }
.viewer-title { height: 25px; display: flex; align-items: center; flex: none; position: relative; padding-left: 1px; }
.vicon { margin-top: 3px; }
.vtext { padding-top: 5px; }
.vbtns { margin-left: auto; display: flex; height: 20px; margin-top: 5px; }
.vbtns span { width: 23px; height: 20px; border: 1px solid #aaa; display: flex; align-items: center; justify-content: center; background: #e8e8e8; }
.canvas { width: 1123px; height: 777px; background: #000; position: relative; overflow: hidden; flex: none; }
.scene { position: absolute; left: 0; top: 0; }
.ax { font-family: "Liberation Sans", sans-serif; font-size: 11px; }
.legend { position: absolute; left: 4px; top: 340px; color: #f2f2f2; font-family: "Liberation Mono", monospace; font-size: 12px; letter-spacing: -.2px; }
.legend-title { height: 32px; line-height: 14px; padding-top: 1px; }
.lg { height: 40px; display: flex; align-items: flex-start; line-height: 32px; white-space: nowrap; }
.lg i { width: 20px; height: 40px; flex: none; }
.c30 { background: #999; } .c28 { background: #ffc8cc; } .c27 { background: #ffc832; } .c20 { background: #ff7d00; } .c19 { background: #ff8087; } .c17 { background: #646464; } .c16 { background: #ff7d00; } .c7 { background: #8c8c6e; } .c4 { background: #6ed700; } .c2 { background: #804444; }

.rightpanel { width: 460px; flex: none; background: #e5e5e5; display: flex; flex-direction: column; padding-left: 2px; border-left: 1px solid #ddd; }
.panel-head.rp { padding: 0 7px 0 9px; height: 41px; }
.groupbox { margin: 10px 8px 0 9px; height: 729px; flex: none; border: 1px solid #aaa; padding: 10px 10px 0; display: flex; flex-direction: column; }
.rtools { height: 55px; border: 1px solid #aaa; border-right-color: #fff; border-bottom-color: #aaa; padding: 9px; flex: none; }
.rtools-in { height: 36px; background: #eee; display: flex; align-items: center; gap: 8px; padding-left: 8px; }
.vsep { width: 1px; height: 26px; background: #ccc; margin: 0 -1px 0 0; }
.tablewrap { margin-top: 7px; height: 594px; background: #fff; border: 1px solid #aaa; flex: none; }
.towers { width: 100%; border-collapse: collapse; table-layout: fixed; font-size: 12px; }
.towers th { height: 25px; background: #e5e5e5; font-weight: 400; border-right: 2px solid #ccc; padding: 0 0 2px; }
.towers th:last-child { border-right: 0; }
.c-n { width: 127px; } .c-t { width: 168px; }
.towers td { height: 30px; padding: 0; text-align: center; border-bottom: 1px solid #ccc; border-right: 1px solid #ccc; }
.towers td:last-child { border-right: 0; }
.towers td.tc { padding: 0; }
.combo { height: 29px; border: 2px solid #aaa; background: #f0f0f0; display: flex; align-items: center; padding: 0 0 0 1px; }
.combo span { width: 146px; height: 23px; display: flex; align-items: center; justify-content: center; padding-top: 2px; font-family: "Liberation Mono", monospace; font-size: 12px; letter-spacing: -1.200px; color: #777; }
.combo .caret { margin-left: 6px; border-top-color: #888; }
.ten { background: #f4c2c2; }
.str { background: #c1f2c1; }
.opts { display: flex; align-items: center; height: 20px; margin-top: 8px; color: #222; }
.opts.second { margin-top: 6px; }
.box { width: 12px; height: 12px; background: #fff; border: 1px solid #aaa; margin-right: 6px; }
.radio { width: 12px; height: 12px; border-radius: 50%; background: #fff; border: 1px solid #aaa; margin-right: 6px; position: relative; }
.radio.sel::after { content: ""; position: absolute; left: 2px; top: 2px; width: 6px; height: 6px; border-radius: 50%; background: #777; }
.o1 { width: 137px; } .o2 { width: 59px; } .o3 { width: 53px; }
.modebox { width: 62px; height: 20px; background: #fff; border: 1px solid #aaa; display: flex; align-items: center; padding-left: 2px; }
.modebox .caret { margin-left: 11px; }
.spin { width: 56px; height: 18px; background: #fff; border: 1px solid #aaa; display: flex; align-items: center; padding-left: 3px; margin-left: 6px; position: relative; }
.spin.dis { background: #e5e5e5; color: #888; }
.startlabel { margin-left: 35px; }
.updown { position: absolute; right: 4px; top: 3px; display: flex; flex-direction: column; gap: 3px; }
.updown i { width: 0; height: 0; border-left: 3px solid transparent; border-right: 3px solid transparent; border-bottom: 3px solid #777; }
.updown i:last-child { border-bottom: 0; border-top: 3px solid #777; }
.dock-tabs.rt { margin-left: 9px; height: 19px; margin-top: 0; }
.rt .dt { padding: 1px 11px 0; }
.rt .dt.active { width: 85px; padding: 1px 0 0; justify-content: center; background: #fafafa; }

.splitter { height: 4px; background: #ccc; flex: none; }
.log { flex: 1; display: flex; background: #fff; border-left: 1px solid #aaa; border-bottom: 1px solid #aaa; min-height: 0; }
.log-text { flex: 1; display: flex; flex-direction: column; }
.log-line { height: 20px; background: #d6d6d6; display: flex; align-items: center; padding-left: 4px; white-space: nowrap; }
.log-line .msg { margin-left: 16px; }
.log-blank { flex: 1; background: #fff; }
.log-scroll { width: 17px; flex: none; background: #f0f0f0; display: flex; flex-direction: column; align-items: center; }
.log-scroll span { height: 19px; display: flex; align-items: center; }

.status { flex: 1; background: #f0f0f0; display: flex; align-items: center; padding: 0 13px 2px 9px; justify-content: space-between; }
.copy { color: #111; }
.micon { font: 700 16px "Liberation Sans", sans-serif; fill: #2f6fb8; }
.licon { font: 700 13px "Liberation Sans", sans-serif; fill: #d0342c; }
.dicon { font: 700 10px "Liberation Sans", sans-serif; fill: #2f7fc8; }
.cicon { font: 700 24px "Liberation Serif", serif; fill: #2f6fb8; }
.iicon { font: 700 10px "Liberation Serif", serif; fill: #fff; }
.bigletter { font: 700 24px "Liberation Serif", serif; fill: #3468a8; }
.tinyletter { font: 700 10px "Liberation Serif", serif; fill: #3468a8; }
.idletter { font: 400 17px "Noto Sans", sans-serif; fill: #3a78d8; }
```
